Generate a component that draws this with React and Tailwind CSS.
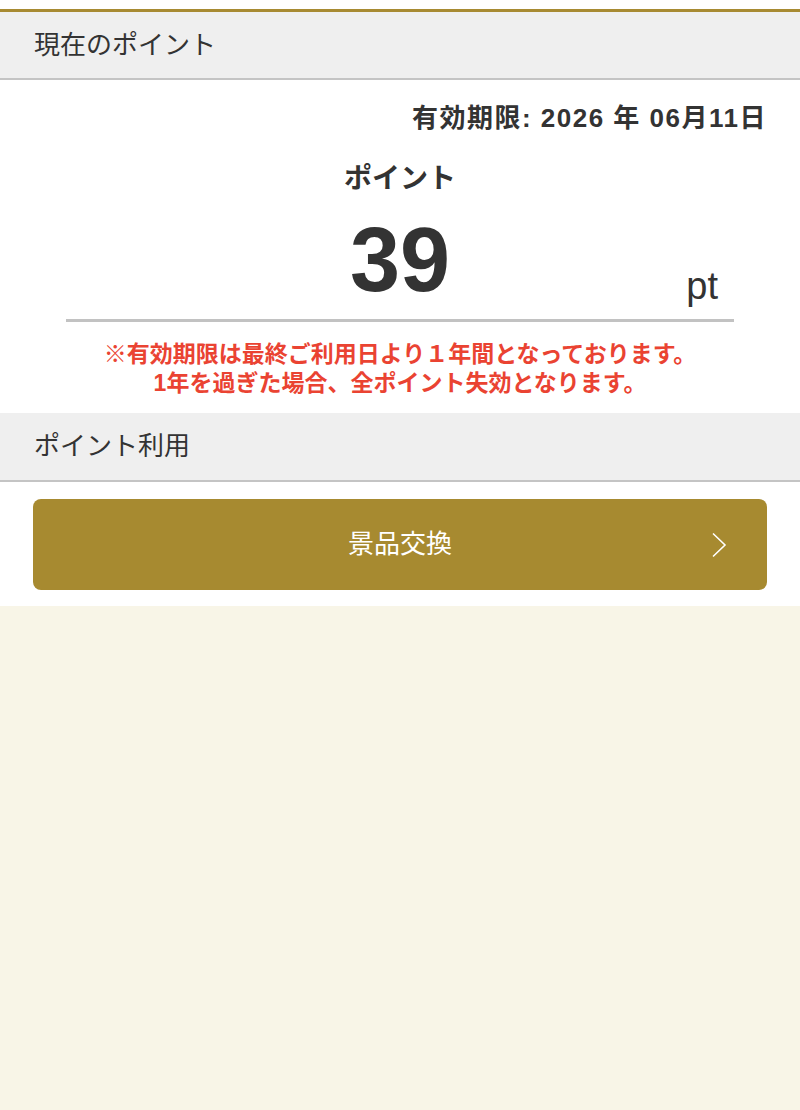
export default function App() {
  const font = { fontFamily: '"Liberation Sans", "Noto Sans CJK JP", sans-serif' };
  return (
    <div className="min-h-[1110px] bg-[#f8f5e7] text-[#333333]" style={font}>
      <div className="bg-white pt-[9px]">
        <div className="border-t-[3px] border-[#a78a32]">
          <div className="h-[68px] bg-[#efefef] border-b-2 border-[#c4c4c4] flex items-center px-[34px] text-[26px]">
            現在のポイント
          </div>
        </div>
        <div className="pt-[21px] pb-[15px]">
          <div className="text-right pr-[33px] text-[26px] font-bold leading-[34px] tracking-[1.5px]">
            有効期限: 2026 年 06月11日
          </div>
          <div className="mt-[26px] text-center text-[28px] font-bold leading-[36px]">ポイント</div>
          <div className="mx-[66px] mt-[4px] border-b-[3px] border-[#c2c2c2] grid grid-cols-[1fr_auto_1fr]">
            <div></div>
            <div className="text-[90px] font-bold leading-[118px]">39</div>
            <div className="flex justify-end items-end pr-[16px] pb-[13px]">
              <span className="text-[38px] leading-[40px]">pt</span>
            </div>
          </div>
          <div className="mt-[18px] text-center text-[23px] font-bold leading-[29px] text-[#ea4332]">
            <div>※有効期限は最終ご利用日より１年間となっております。</div>
            <div>1年を過ぎた場合、全ポイント失効となります。</div>
          </div>
        </div>
        <div className="h-[69px] bg-[#efefef] border-b-2 border-[#c4c4c4] flex items-center px-[34px] text-[26px]">
          ポイント利用
        </div>
        <div className="px-[33px] pt-[17px] pb-[16px]">
          <div className="h-[91px] rounded-[8px] bg-[#a78a30] flex items-center justify-center relative text-white text-[26px]">
            <span>景品交換</span>
            <svg className="absolute right-[40px]" width="16" height="26" viewBox="0 0 16 26" fill="none">
              <path d="M2 1.5 L14 13 L2 24.5" stroke="white" strokeWidth="1.6" />
            </svg>
          </div>
        </div>
      </div>
    </div>
  );
}
